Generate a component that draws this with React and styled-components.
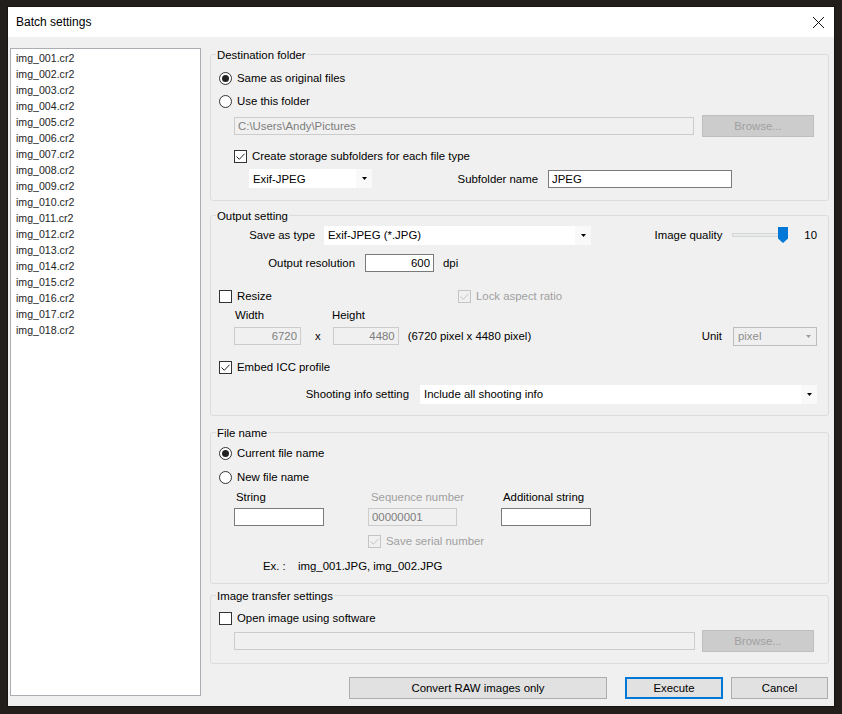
import React from 'react';
import styled, { createGlobalStyle } from 'styled-components';

const GlobalStyle = createGlobalStyle`
  html, body {
    margin: 0;
    padding: 0;
  }
  body {
    width: 842px;
    height: 714px;
    overflow: hidden;
    background: #221e1b;
    font-family: "Liberation Sans", Arial, sans-serif;
    font-size: 11.4px;
    color: #000;
  }
`;

const Screen = styled.div`
  padding: 7px 0 0 8px;
`;

const Dialog = styled.div`
  width: 826px;
  height: 699px;
  background: #f0f0f0;
  display: flex;
  flex-direction: column;
  box-shadow: 0 0 0 1px rgba(0, 0, 0, 0.35);
`;

const TitleBar = styled.div`
  height: 30px;
  flex-shrink: 0;
  background: #fff;
  display: flex;
  align-items: center;
  justify-content: space-between;
  padding: 0 8px;
  font-size: 12px;
`;

const CloseIcon = styled.svg`
  width: 13px;
  height: 13px;
  margin-right: 1px;
`;

const Body = styled.div`
  flex: 1;
  display: flex;
  padding: 11px 5px 10px 2px;
`;

const FileList = styled.ul`
  list-style: none;
  margin: 0;
  width: 191px;
  height: 648px;
  box-sizing: border-box;
  border: 1px solid #abadb3;
  background: #fff;
  padding: 1px 0 0 5px;
  flex-shrink: 0;
`;

const FileItem = styled.li`
  height: 16px;
  line-height: 16px;
  font-size: 10.6px;
  color: #1e1e1e;
`;

const Settings = styled.div`
  margin-left: 9px;
  width: 619px;
  display: flex;
  flex-direction: column;
`;

const GroupBox = styled.section`
  height: ${p => p.$h}px;
  margin-top: ${p => p.$mt}px;
  box-sizing: border-box;
  border: 1px solid #dcdcdc;
  border-radius: 3px;
`;

const Caption = styled.div`
  width: fit-content;
  height: 13px;
  line-height: 13px;
  margin: -6px 0 0 5px;
  padding: 0 1px;
  background: #f0f0f0;
`;

const Row = styled.div`
  display: flex;
  align-items: center;
  height: ${p => p.$h || 20}px;
  margin-top: ${p => p.$mt || 0}px;
  padding-left: ${p => p.$pl || 0}px;
  padding-right: ${p => p.$pr || 0}px;
`;

const Text = styled.span`
  white-space: nowrap;
  color: ${p => (p.$disabled ? '#a0a0a0' : '#000')};
  margin-left: ${p => p.$ml || 0}px;
`;

const RightLabel = styled.span`
  width: ${p => p.$w}px;
  flex-shrink: 0;
  text-align: right;
  white-space: nowrap;
  margin-right: ${p => p.$gap}px;
`;

const Spacer = styled.div`
  flex: 1;
`;

const Cell = styled.div`
  width: ${p => p.$w}px;
  flex-shrink: 0;
  padding-left: ${p => p.$pl || 0}px;
  box-sizing: border-box;
  white-space: nowrap;
  color: ${p => (p.$disabled ? '#a0a0a0' : '#000')};
`;

const RadioDot = styled.span`
  width: 13px;
  height: 13px;
  box-sizing: border-box;
  border-radius: 50%;
  border: 1px solid #333;
  background: #fff;
  display: flex;
  align-items: center;
  justify-content: center;
  flex-shrink: 0;

  &::after {
    content: '';
    width: 7px;
    height: 7px;
    border-radius: 50%;
    background: #222;
    display: ${p => (p.$checked ? 'block' : 'none')};
  }
`;

const CheckBox = styled.span`
  width: 13px;
  height: 13px;
  box-sizing: border-box;
  border: 1px solid ${p => (p.$disabled ? '#c4c4c4' : '#333')};
  background: ${p => (p.$disabled ? 'transparent' : '#fff')};
  display: flex;
  align-items: center;
  justify-content: center;
  flex-shrink: 0;
`;

const TextField = styled.input`
  width: ${p => p.$w}px;
  height: 18px;
  box-sizing: border-box;
  margin: 0;
  margin-left: ${p => p.$ml || 0}px;
  padding: 0 3px;
  font: inherit;
  border: 1px solid ${p => (p.disabled ? '#cccccc' : '#7a7a7a')};
  background: ${p => (p.disabled ? '#f0f0f0' : '#fff')};
  color: ${p => (p.disabled ? '#7d7d7d' : '#000')};
  text-align: ${p => (p.$right ? 'right' : 'left')};
  outline: none;
  flex-shrink: 0;
`;

const ComboBox = styled.div`
  width: ${p => p.$w}px;
  height: 19px;
  box-sizing: border-box;
  display: flex;
  align-items: center;
  padding-left: 4px;
  background: ${p => (p.$disabled ? '#efefef' : '#fff')};
  border: ${p => (p.$disabled ? '1px solid #bdbdbd' : 'none')};
  color: ${p => (p.$disabled ? '#8d8d8d' : '#000')};
  flex-shrink: 0;
  margin-left: ${p => p.$ml || 0}px;
`;

const ComboValue = styled.span`
  flex: 1;
  white-space: nowrap;
`;

const ComboArrow = styled.span`
  width: 16px;
  align-self: stretch;
  display: flex;
  align-items: center;
  justify-content: center;
  background: ${p => (p.$disabled ? 'transparent' : '#f9f9f9')};
`;

const Button = styled.button`
  width: ${p => p.$w}px;
  height: 22px;
  margin: 0;
  margin-left: ${p => p.$ml || 0}px;
  padding: 0;
  box-sizing: border-box;
  font: inherit;
  color: #000;
  background: #e1e1e1;
  border: 1px solid ${p => (p.$primary ? '#0078d7' : '#adadad')};
  box-shadow: ${p => (p.$primary ? 'inset 0 0 0 1px #0078d7' : 'none')};
  flex-shrink: 0;

  &:disabled {
    background: #cccccc;
    border-color: #bfbfbf;
    color: #a0a0a0;
  }
`;

const ButtonRow = styled.div`
  display: flex;
  justify-content: flex-end;
  margin-top: 13px;
  padding-right: 1px;
`;

const ComboWrap = styled.div`
  flex-shrink: 0;
`;

function Arrow({ disabled }) {
  return (
    <svg width="5" height="3" viewBox="0 0 5 3">
      <path d="M0 0h5L2.5 3z" fill={disabled ? '#9a9a9a' : '#000'} />
    </svg>
  );
}

function Combo({ w, value, disabled, ml }) {
  return (
    <ComboBox $w={w} $disabled={disabled} $ml={ml}>
      <ComboValue>{value}</ComboValue>
      <ComboArrow $disabled={disabled}>
        <Arrow disabled={disabled} />
      </ComboArrow>
    </ComboBox>
  );
}

function Radio({ checked, label }) {
  return (
    <>
      <RadioDot $checked={checked} />
      <Text $ml={5}>{label}</Text>
    </>
  );
}

function Check({ checked, disabled, label }) {
  return (
    <>
      <CheckBox $disabled={disabled}>
        {checked && (
          <svg width="11" height="11" viewBox="0 0 11 11">
            <path d="M1.5 5.5l2.8 2.8L9.5 2.8" fill="none" stroke={disabled ? '#c4c4c4' : '#222'} strokeWidth="1" />
          </svg>
        )}
      </CheckBox>
      <Text $ml={5} $disabled={disabled}>{label}</Text>
    </>
  );
}

function QualitySlider() {
  return (
    <svg width="58" height="18" viewBox="0 0 58 18">
      <rect x="0.5" y="7.5" width="55" height="3" fill="#e7eaea" stroke="#d6d6d6" />
      <path d="M46 1h10v11.5l-5 4.5l-5-4.5z" fill="#0078d7" />
    </svg>
  );
}

const files = Array.from({ length: 18 }, (_, i) => `img_${String(i + 1).padStart(3, '0')}.cr2`);

export default function App() {
  return (
    <Screen>
      <GlobalStyle />
      <Dialog>
        <TitleBar>
          <span>Batch settings</span>
          <CloseIcon viewBox="0 0 13 13">
            <path d="M1 1l11 11M12 1L1 12" stroke="#111" strokeWidth="1" />
          </CloseIcon>
        </TitleBar>
        <Body>
          <FileList>
            {files.map(f => (
              <FileItem key={f}>{f}</FileItem>
            ))}
          </FileList>
          <Settings>
            <GroupBox $h={147} $mt={6}>
              <Caption>Destination folder</Caption>
              <Row $mt={6} $pl={8}>
                <Radio checked label="Same as original files" />
              </Row>
              <Row $mt={3} $pl={8}>
                <Radio label="Use this folder" />
              </Row>
              <Row $h={22} $mt={4} $pl={23}>
                <TextField $w={460} disabled value="C:\Users\Andy\Pictures" readOnly />
                <Button $w={112} $ml={8} disabled>Browse...</Button>
              </Row>
              <Row $mt={9} $pl={23}>
                <Check checked label="Create storage subfolders for each file type" />
              </Row>
              <Row $h={19} $mt={3} $pl={38}>
                <Combo w={123} value="Exif-JPEG" />
                <RightLabel $w={166} $gap={10}>Subfolder name</RightLabel>
                <TextField $w={184} value="JPEG" readOnly />
              </Row>
            </GroupBox>

            <GroupBox $h={201} $mt={14}>
              <Caption>Output setting</Caption>
              <Row $mt={2} $pr={11}>
                <RightLabel $w={104} $gap={9}>Save as type</RightLabel>
                <Combo w={267} value="Exif-JPEG (*.JPG)" />
                <Spacer />
                <Text>Image quality</Text>
                <Cell $w={10} />
                <QualitySlider />
                <Cell $w={14} />
                <Text>10</Text>
              </Row>
              <Row $mt={8}>
                <RightLabel $w={144} $gap={10}>Output resolution</RightLabel>
                <TextField $w={69} $right value="600" readOnly />
                <Text $ml={9}>dpi</Text>
              </Row>
              <Row $mt={13} $pl={8}>
                <Cell $w={239}>
                  <Row>
                    <Check label="Resize" />
                  </Row>
                </Cell>
                <Check checked disabled label="Lock aspect ratio" />
              </Row>
              <Row $h={14} $mt={2} $pl={23}>
                <Cell $w={98} $pl={1}>Width</Cell>
                <Cell $w={80}>Height</Cell>
              </Row>
              <Row $mt={4} $pl={23} $pr={11}>
                <TextField $w={67} $right disabled value="6720" readOnly />
                <Text $ml={14}>x</Text>
                <TextField $w={66} $ml={12} $right disabled value="4480" readOnly />
                <Text $ml={9}>(6720 pixel x 4480 pixel)</Text>
                <Spacer />
                <Text>Unit</Text>
                <Combo w={84} ml={11} value="pixel" disabled />
              </Row>
              <Row $mt={11} $pl={8}>
                <Check checked label="Embed ICC profile" />
              </Row>
              <Row $mt={7} $pr={11}>
                <RightLabel $w={198} $gap={11}>Shooting info setting</RightLabel>
                <ComboWrap>
                  <Combo w={397} value="Include all shooting info" />
                </ComboWrap>
              </Row>
            </GroupBox>

            <GroupBox $h={152} $mt={16}>
              <Caption>File name</Caption>
              <Row $mt={3} $pl={8}>
                <Radio checked label="Current file name" />
              </Row>
              <Row $mt={4} $pl={8}>
                <Radio label="New file name" />
              </Row>
              <Row $h={14} $mt={3} $pl={23}>
                <Cell $w={134} $pl={2}>String</Cell>
                <Cell $w={133} $pl={3} $disabled>Sequence number</Cell>
                <Cell $w={100} $pl={2}>Additional string</Cell>
              </Row>
              <Row $h={18} $mt={4} $pl={23}>
                <TextField $w={90} value="" readOnly />
                <TextField $w={89} $ml={44} disabled value="00000001" readOnly />
                <TextField $w={90} $ml={44} value="" readOnly />
              </Row>
              <Row $mt={5} $pl={157}>
                <Check checked disabled label="Save serial number" />
              </Row>
              <Row $h={14} $mt={8} $pl={52}>
                <Cell $w={35}>Ex. :</Cell>
                <Text>img_001.JPG, img_002.JPG</Text>
              </Row>
            </GroupBox>

            <GroupBox $h={69} $mt={11}>
              <Caption>Image transfer settings</Caption>
              <Row $mt={5} $pl={8}>
                <Check label="Open image using software" />
              </Row>
              <Row $h={22} $mt={2} $pl={23}>
                <TextField $w={461} disabled value="" readOnly />
                <Button $w={112} $ml={7} disabled>Browse...</Button>
              </Row>
            </GroupBox>

            <ButtonRow>
              <Button $w={258}>Convert RAW images only</Button>
              <Button $w={98} $ml={18} $primary>Execute</Button>
              <Button $w={97} $ml={8}>Cancel</Button>
            </ButtonRow>
          </Settings>
        </Body>
      </Dialog>
    </Screen>
  );
}
